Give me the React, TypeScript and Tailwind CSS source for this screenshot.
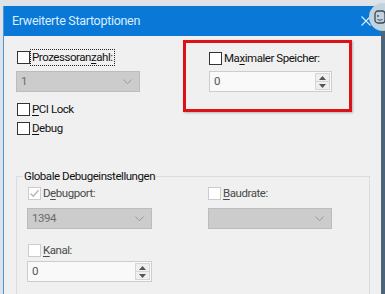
import React from 'react';

function Box({ checked, disabled }: { checked?: boolean; disabled?: boolean }) {
  return (
    <span
      className={`flex h-[13px] w-[13px] shrink-0 items-center justify-center border bg-white ${
        disabled ? 'border-[#cccccc]' : 'border-[#333333]'
      }`}
    >
      {checked && (
        <svg width="11" height="11" viewBox="0 0 11 11">
          <path d="M1.5 5.5 L4.2 8.3 L9.6 2.2" fill="none" stroke="#b5b5b5" strokeWidth="1.3" />
        </svg>
      )}
    </span>
  );
}

function Check({
  pre,
  key1,
  post,
  checked,
  disabled,
  focus,
}: {
  pre?: string;
  key1: string;
  post: string;
  checked?: boolean;
  disabled?: boolean;
  focus?: boolean;
}) {
  return (
    <div className="flex h-[13px] items-center">
      <Box checked={checked} disabled={disabled} />
      <span
        className={`ml-[1px] whitespace-nowrap px-[1px] leading-[15px] ${
          focus ? 'outline outline-1 outline-dotted outline-[#222]' : ''
        } ${disabled ? 'text-[#4a4a4a]' : 'text-[#111]'}`}
      >
        {pre}
        <u className="underline-offset-2">{key1}</u>
        {post}
      </span>
    </div>
  );
}

function Select({ value, width }: { value: string; width: string }) {
  return (
    <div className={`flex h-[21px] ${width} items-center justify-between border border-[#bcbcbc] bg-[#cccccc] pl-[4px] pr-[7px] text-[#6d6d6d]`}>
      <span>{value}</span>
      <svg width="9" height="6" viewBox="0 0 9 6">
        <path d="M0.5 0.5 L4.5 4.8 L8.5 0.5" fill="none" stroke="#9a9a9a" strokeWidth="1" />
      </svg>
    </div>
  );
}

function Spin({ width }: { width: string }) {
  return (
    <div className={`flex h-[21px] ${width} items-stretch border border-[#cdcdcd] bg-[#f9f9f9]`}>
      <span className="flex flex-1 items-center pl-[4px] text-[#555]">0</span>
      <div className="my-[1px] mr-[1px] flex w-[15px] flex-col border border-[#d6d6d6] bg-[#efefef]">
        <div className="flex flex-1 items-center justify-center border-b border-[#d6d6d6]">
          <svg width="7" height="4" viewBox="0 0 7 4">
            <path d="M0 4 L3.5 0 L7 4 Z" fill="#555" />
          </svg>
        </div>
        <div className="flex flex-1 items-center justify-center">
          <svg width="7" height="4" viewBox="0 0 7 4">
            <path d="M0 0 L3.5 4 L7 0 Z" fill="#555" />
          </svg>
        </div>
      </div>
    </div>
  );
}

export default function App() {
  return (
    <div
      className="relative flex h-[294px] w-[385px] overflow-hidden bg-[#dfe2e6] pl-[3px] pt-[6px] text-[11.5px] tracking-[-0.45px]"
      style={{ fontFamily: 'Roboto, "Segoe UI", sans-serif' }}
    >
      <div className="flex w-[378px] flex-col border-l border-[#4a98dc] bg-[#f0f0f0]">
        <div className="flex h-[30px] shrink-0 items-center justify-between bg-[#0a78d7] pl-[8px] pr-[10px]">
          <span className="text-[12.5px] tracking-[-0.3px] text-[#d9eeff]">Erweiterte Startoptionen</span>
          <svg width="10" height="10" viewBox="0 0 10 10">
            <path d="M0.5 0.5 L9.5 9.5 M9.5 0.5 L0.5 9.5" stroke="#d9eeff" strokeWidth="1.1" />
          </svg>
        </div>

        <div className="flex flex-col pt-[4px]">
          <div className="flex items-start">
            <div className="ml-[12px] mt-[11px] flex w-[124px] flex-col">
              <div className="pl-[1px]">
                <Check key1="z" pre="Prozessoran" post="ahl:" focus />
              </div>
              <div className="mt-[7px]">
                <Select value="1" width="w-[124px]" />
              </div>
              <div className="mt-[11px] pl-[1px]">
                <Check key1="P" post="CI Lock" />
              </div>
              <div className="mt-[6px] pl-[1px]">
                <Check key1="D" post="ebug" />
              </div>
            </div>

            <div className="ml-[43px] flex h-[72px] w-[169px] flex-col border-[3px] border-[#dc1219] pl-[23px] pt-[9px] shadow-[1px_1px_2px_rgba(0,0,0,0.25)]">
              <Check pre="Ma" key1="x" post="imaler Speicher:" />
              <div className="mt-[6px]">
                <Spin width="w-[123px]" />
              </div>
            </div>
          </div>

          <fieldset className="ml-[12px] mr-[11px] mt-[33px] h-[140px] border border-[#dcdcdc]">
            <legend className="ml-[6px] px-[1px] leading-[16px] text-[#111]">Globale Debugeinstellungen</legend>
            <div className="mt-[3px] flex pl-[10px]">
              <div className="flex w-[125px] flex-col">
                <div className="pl-[1px]">
                  <Check pre="D" key1="e" post="bugport:" checked disabled />
                </div>
                <div className="mt-[8px]">
                  <Select value="1394" width="w-[125px]" />
                </div>
                <div className="mt-[15px] pl-[1px]">
                  <Check key1="K" post="anal:" disabled />
                </div>
                <div className="mt-[4px]">
                  <Spin width="w-[125px]" />
                </div>
              </div>
              <div className="ml-[56px] flex w-[124px] flex-col">
                <div>
                  <Check key1="B" post="audrate:" disabled />
                </div>
                <div className="mt-[8px]">
                  <Select value="" width="w-[124px]" />
                </div>
              </div>
            </div>
          </fieldset>
        </div>
      </div>
      <div className="w-[4px] bg-[#4e6479]" />

      <div className="absolute right-[-12px] top-[3px] flex h-[28px] w-[28px] items-center justify-start rounded-full bg-[#c3d2df] pl-[4px]">
        <svg width="14" height="16" viewBox="0 0 14 16">
          <rect x="2" y="2" width="10" height="12" rx="3" fill="none" stroke="#3b4a58" strokeWidth="1.3" />
          <circle cx="5" cy="7" r="0.9" fill="#3b4a58" />
          <path d="M4.5 10.5 Q7 12 9.5 10.5" fill="none" stroke="#3b4a58" strokeWidth="1" />
        </svg>
      </div>
    </div>
  );
}
